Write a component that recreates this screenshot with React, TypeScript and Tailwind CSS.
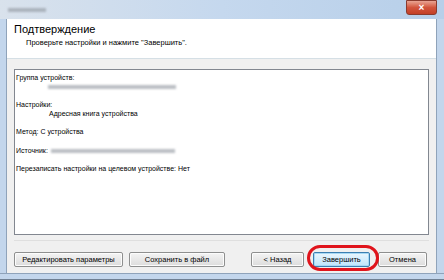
import React from "react";

const font = { fontFamily: '"Liberation Sans", Arial, sans-serif' };

function Blur({ w }: { w: number }) {
  return <span className="inline-block h-[4px] bg-[#8f959d] opacity-60 blur-[1px] align-middle" style={{ width: w }} />;
}

function Btn({ label, w, primary }: { label: string; w: string; primary?: boolean }) {
  return (
    <div
      className={`${w} h-[15px] flex items-center justify-center rounded-[2px] border text-[7.5px] text-black ${
        primary
          ? "border-[#3c7fb1] bg-gradient-to-b from-[#eaf6fd] to-[#bee6fd] shadow-[inset_0_0_0_1px_#a7d9f5]"
          : "border-[#8e8f8f] bg-gradient-to-b from-[#f4f4f4] to-[#dcdcdc] shadow-[inset_0_0_0_1px_#fcfcfc]"
      }`}
    >
      {label}
    </div>
  );
}

export default function App() {
  return (
    <div className="w-[444px] h-[280px] flex flex-col bg-[#c3d6ec] overflow-hidden" style={font}>
      {/* title bar */}
      <div className="h-[20px] relative flex items-center pl-[8px] bg-gradient-to-r from-[#d9e2ec] via-[#c5d8ee] to-[#b7cfe9]">
        <Blur w={38} />
        <div className="absolute right-[7px] top-0 w-[31px] h-[15px] rounded-b-[3px] border border-[#8a3b2e] bg-gradient-to-b from-[#e8a493] via-[#d2553d] to-[#c33f26] flex items-center justify-center">
          <span className="text-white text-[10px] font-bold leading-none">×</span>
        </div>
      </div>

      <div className="flex-1 flex">
        <div className="w-[7px] border-r border-[#8fa3ba]" />
        <div className="flex-1 flex flex-col bg-[#f0f0f0]">
          {/* header */}
          <div className="h-[40px] bg-white border-b border-[#d5dfe5] pl-[7px] pt-[3px]">
            <div className="text-[11px] leading-[14px] text-black">Подтверждение</div>
            <div className="text-[7.5px] leading-[11px] text-black pl-[12px] mt-[1px]">Проверьте настройки и нажмите "Завершить".</div>
          </div>

          {/* body */}
          <div className="flex-1 flex flex-col px-[7px] pt-[10px] pb-[6px]">
            <div className="h-[166px] bg-white border border-[#828790] px-[1px] pt-[3px] text-[7px] leading-[9.1px] text-black">
              <div>Группа устройств:</div>
              <div className="pl-[32px] flex items-center h-[9px]"><Blur w={128} /></div>
              <div className="h-[9px]" />
              <div>Настройки:</div>
              <div className="pl-[33px]">Адресная книга устройства</div>
              <div className="h-[9px]" />
              <div>Метод: С устройства</div>
              <div className="h-[9px]" />
              <div className="flex items-center">Источник:<span className="ml-[3px]"><Blur w={124} /></span></div>
              <div className="h-[9px]" />
              <div>Перезаписать настройки на целевом устройстве: Нет</div>
            </div>
            <div className="mt-[5px] border-t border-[#dfdfdf]" />
            <div className="mt-[11px] flex items-center relative">
              <Btn label="Редактировать параметры" w="w-[109px]" />
              <div className="ml-[6px]"><Btn label="Сохранить в файл" w="w-[96px]" /></div>
              <div className="ml-[26px]"><Btn label="< Назад" w="w-[53px]" /></div>
              <div className="ml-[9px]"><Btn label="Завершить" w="w-[57px]" primary /></div>
              <div className="ml-[8px]"><Btn label="Отмена" w="w-[49px]" /></div>
              <div className="absolute left-[293px] top-[-7px] w-[72px] h-[26px] rounded-full border-[3px] border-[#e0141c]" />
            </div>
          </div>
        </div>
        <div className="w-[8px] border-l border-[#8fa3ba]" />
      </div>
      <div className="h-[7px] border-t border-[#8fa3ba] border-b border-b-[#6f7f92]" />
    </div>
  );
}
